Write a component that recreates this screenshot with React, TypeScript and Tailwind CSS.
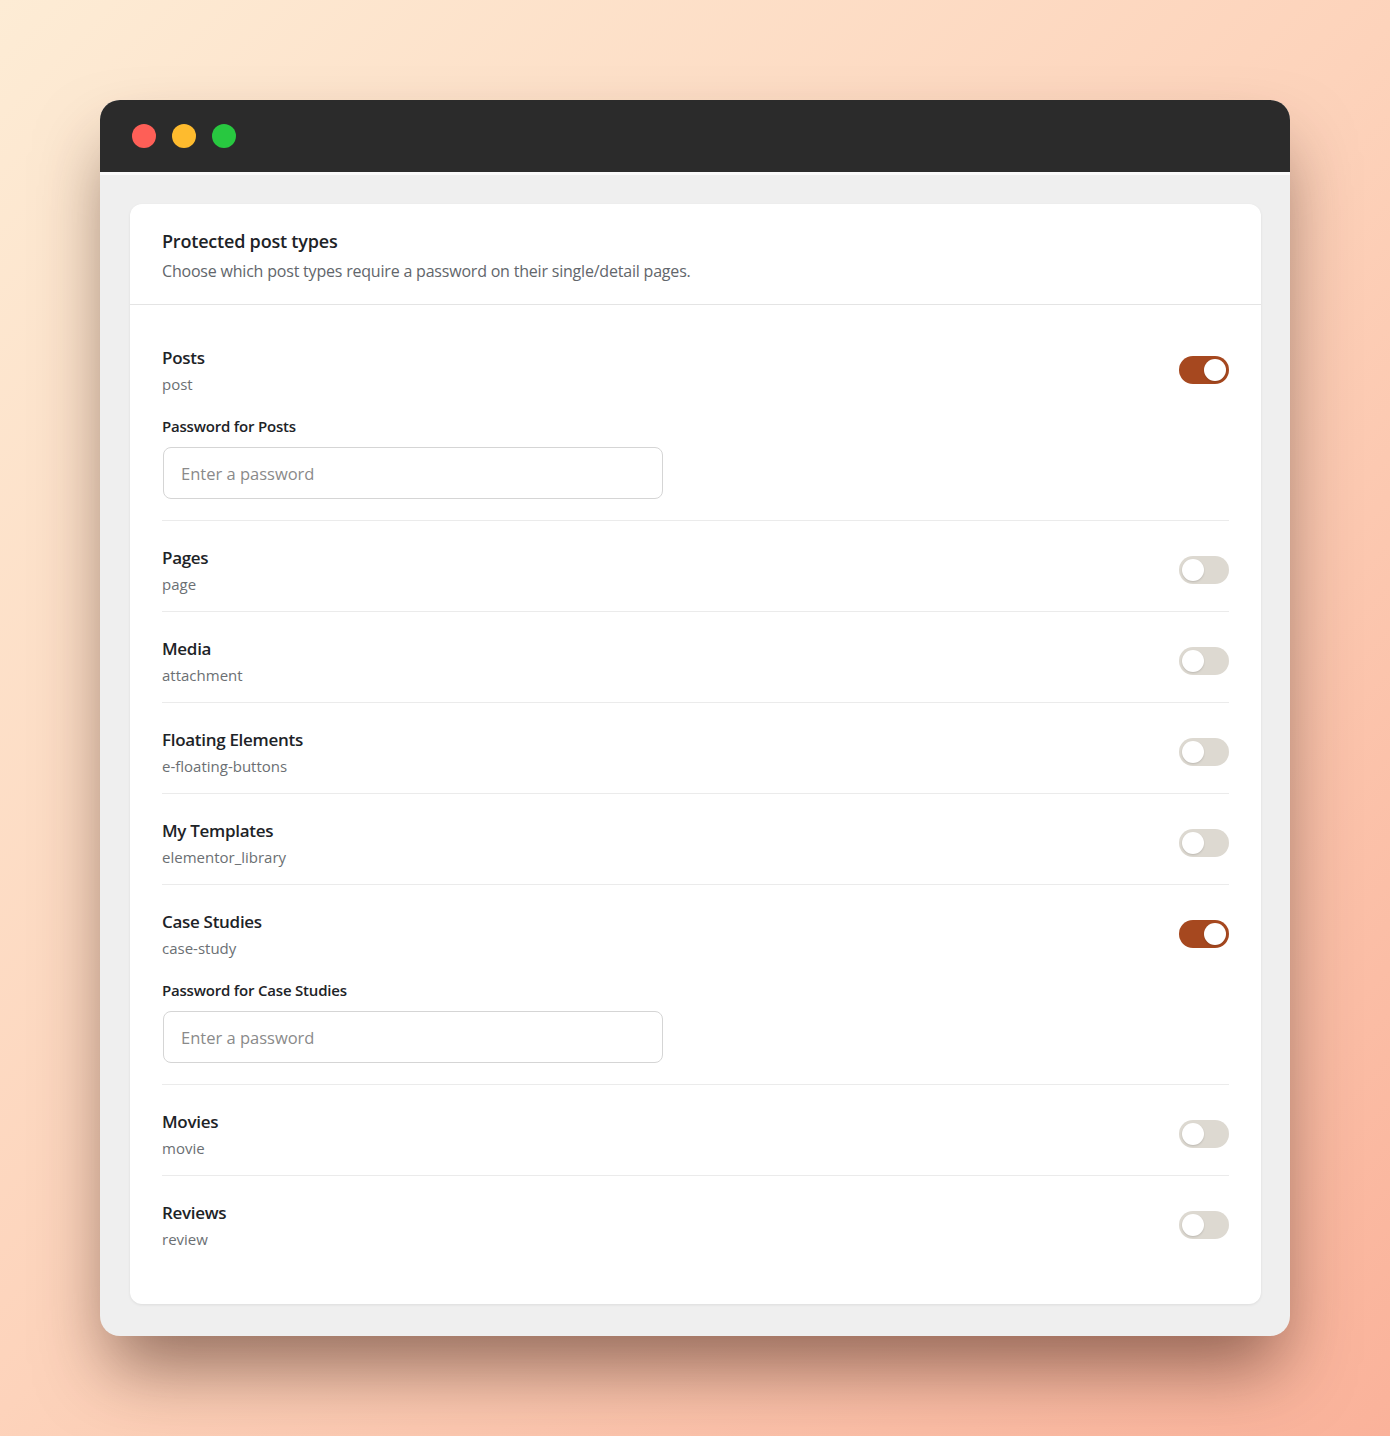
import { useState } from 'react'

type PostType = {
  name: string
  slug: string
  on: boolean
}

const initialTypes: PostType[] = [
  { name: 'Posts', slug: 'post', on: true },
  { name: 'Pages', slug: 'page', on: false },
  { name: 'Media', slug: 'attachment', on: false },
  { name: 'Floating Elements', slug: 'e-floating-buttons', on: false },
  { name: 'My Templates', slug: 'elementor_library', on: false },
  { name: 'Case Studies', slug: 'case-study', on: true },
  { name: 'Movies', slug: 'movie', on: false },
  { name: 'Reviews', slug: 'review', on: false },
]

function Toggle({ on, onClick }: { on: boolean; onClick: () => void }) {
  return (
    <button
      type="button"
      onClick={onClick}
      className={
        'flex h-[28px] w-[50px] shrink-0 items-center rounded-full p-[3px] transition-colors ' +
        (on ? 'justify-end bg-[#a6481f]' : 'justify-start bg-[#ddd9d1]')
      }
    >
      <span className="h-[22px] w-[22px] rounded-full bg-white shadow-[0_1px_2px_rgba(0,0,0,0.15)]" />
    </button>
  )
}

export default function App() {
  const [types, setTypes] = useState(initialTypes)

  const flip = (i: number) => {
    setTypes((prev) => prev.map((t, j) => (j === i ? { ...t, on: !t.on } : t)))
  }

  return (
    <div
      className="min-h-[1436px] bg-[linear-gradient(135deg,#fdecd5_0%,#fdd3bb_50%,#fab29a_100%)] pt-[100px] px-[100px]"
      style={{ fontFamily: '"Open Sans", "Noto Sans", sans-serif' }}
    >
      <div className="overflow-hidden rounded-[20px] bg-[#efefef] shadow-[0_40px_70px_-10px_rgba(60,30,20,0.55)]">
        {/* title bar */}
        <div className="flex h-[72px] items-center gap-4 bg-[#2b2b2b] px-8">
          <span className="h-6 w-6 rounded-full bg-[#fe5f57]" />
          <span className="h-6 w-6 rounded-full bg-[#febb2e]" />
          <span className="h-6 w-6 rounded-full bg-[#28c840]" />
        </div>

        <div className="border-t-[3px] border-white/70 pl-[30px] pr-[29px] pt-[29px] pb-[32px]">
          <div className="rounded-[12px] bg-white shadow-[0_1px_3px_rgba(0,0,0,0.08)]">
            <div className="border-b border-[#e4e4e4] px-8 pt-[24px] pb-[22px]">
              <h2 className="text-[18px] font-semibold leading-[26px] tracking-[-0.2px] text-[#1d2327]">
                Protected post types
              </h2>
              <p className="mt-[6px] text-[16px] leading-[22px] tracking-[-0.2px] text-[#62666b]">
                Choose which post types require a password on their single/detail pages.
              </p>
            </div>

            <div className="px-8 pt-[16px] pb-[38px]">
              {types.map((t, i) => (
                <div
                  key={t.slug}
                  className={'pt-[25px] pb-[17px] ' + (i < types.length - 1 ? 'border-b border-[#ebebeb]' : '')}
                >
                  <div className="flex items-center justify-between">
                    <div>
                      <div className="text-[17px] font-semibold leading-[24px] tracking-[-0.3px] text-[#1d2327]">
                        {t.name}
                      </div>
                      <div className="mt-[4px] text-[15px] leading-[20px] text-[#6b6f73]">{t.slug}</div>
                    </div>
                    <Toggle on={t.on} onClick={() => flip(i)} />
                  </div>

                  {t.on && (
                    <div className="mt-[22px] pb-[4px]">
                      <label className="block text-[15px] font-semibold leading-[20px] tracking-[-0.2px] text-[#1d2327]">
                        Password for {t.name}
                      </label>
                      <input
                        type="password"
                        placeholder="Enter a password"
                        className="mt-[11px] ml-px h-[52px] w-[500px] rounded-[8px] border border-[#d5d5d5] px-[17px] text-[16.5px] text-[#1d2327] placeholder:text-[#8a8a8a] outline-none"
                      />
                    </div>
                  )}
                </div>
              ))}
            </div>
          </div>
        </div>
      </div>
    </div>
  )
}
